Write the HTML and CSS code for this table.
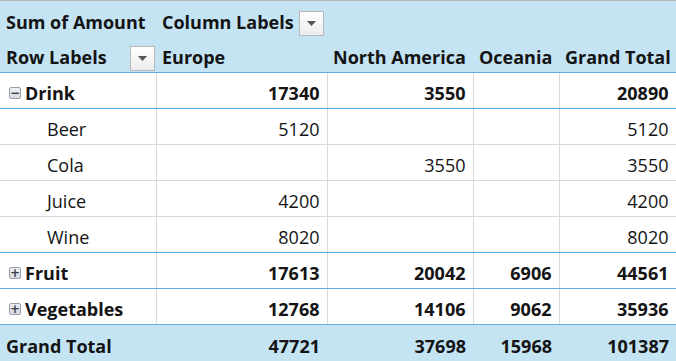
FILE: index.html
```html
<!DOCTYPE html>
<html lang="en">
<head>
    <meta charset="UTF-8">
    <title>Pivot Table</title>
    <link rel="stylesheet" href="styles.css">
</head>
<body>
    <table class="pivot">
        <colgroup>
            <col class="c-label">
            <col class="c-europe">
            <col class="c-na">
            <col class="c-oce">
            <col class="c-total">
        </colgroup>
        <thead>
            <tr class="head-top">
                <th>Sum of Amount</th>
                <th colspan="4" class="split">
                    <div class="field">
                        <span>Column Labels</span>
                        <span class="drop"><svg width="9" height="5" viewBox="0 0 9 5"><path d="M0 0h9L4.5 5z" fill="#555"/></svg></span>
                    </div>
                </th>
            </tr>
            <tr class="head-cols">
                <th>
                    <div class="field">
                        <span>Row Labels</span>
                        <span class="drop"><svg width="9" height="5" viewBox="0 0 9 5"><path d="M0 0h9L4.5 5z" fill="#555"/></svg></span>
                    </div>
                </th>
                <th>Europe</th>
                <th>North America</th>
                <th>Oceania</th>
                <th>Grand Total</th>
            </tr>
        </thead>
        <tbody>
            <tr class="group">
                <td><span class="toggle">&minus;</span>Drink</td>
                <td class="num">17340</td>
                <td class="num">3550</td>
                <td class="num"></td>
                <td class="num">20890</td>
            </tr>
            <tr class="item">
                <td class="indent">Beer</td>
                <td class="num">5120</td>
                <td class="num"></td>
                <td class="num"></td>
                <td class="num">5120</td>
            </tr>
            <tr class="item">
                <td class="indent">Cola</td>
                <td class="num"></td>
                <td class="num">3550</td>
                <td class="num"></td>
                <td class="num">3550</td>
            </tr>
            <tr class="item">
                <td class="indent">Juice</td>
                <td class="num">4200</td>
                <td class="num"></td>
                <td class="num"></td>
                <td class="num">4200</td>
            </tr>
            <tr class="item last">
                <td class="indent">Wine</td>
                <td class="num">8020</td>
                <td class="num"></td>
                <td class="num"></td>
                <td class="num">8020</td>
            </tr>
            <tr class="group">
                <td><span class="toggle">+</span>Fruit</td>
                <td class="num">17613</td>
                <td class="num">20042</td>
                <td class="num">6906</td>
                <td class="num">44561</td>
            </tr>
            <tr class="group">
                <td><span class="toggle">+</span>Vegetables</td>
                <td class="num">12768</td>
                <td class="num">14106</td>
                <td class="num">9062</td>
                <td class="num">35936</td>
            </tr>
        </tbody>
        <tfoot>
            <tr class="grand">
                <td>Grand Total</td>
                <td class="num">47721</td>
                <td class="num">37698</td>
                <td class="num">15968</td>
                <td class="num">101387</td>
            </tr>
        </tfoot>
    </table>
</body>
</html>
```

FILE: styles.css
```css
* {
    margin: 0;
    padding: 0;
    box-sizing: border-box;
}

body {
    background: #ffffff;
    font-family: 'Open Sans', 'Lato', sans-serif;
    color: #141414;
}

.pivot {
    width: 676px;
    table-layout: fixed;
    border-collapse: collapse;
    font-size: 18px;
}

.c-label { width: 156px; }
.c-europe { width: 171px; }
.c-na { width: 146px; }
.c-oce { width: 86px; }
.c-total { width: 117px; }

.pivot tr {
    height: 36px;
}

.pivot th,
.pivot td {
    padding: 0 7px 3px 6px;
    vertical-align: bottom;
    white-space: nowrap;
    line-height: 24px;
}

thead th {
    background: #c4e4f4;
    font-weight: 700;
    text-align: left;
}

.head-top th {
    border-top: 1px solid #b4b4b4;
}

.head-cols th {
    border-bottom: 1px solid #5cb2e4;
}

.head-cols th:last-child {
    border-right: 1px solid #d0d0d0;
}

.pivot th.split {
    padding-right: 0;
}

.pivot .head-cols th:first-child {
    padding-right: 1px;
}

.field {
    display: flex;
    align-items: flex-end;
    justify-content: space-between;
    gap: 5px;
}

.split .field {
    justify-content: flex-start;
}

.drop {
    width: 25px;
    height: 25px;
    margin-bottom: -2px;
    border: 1px solid #b9b9b9;
    background: linear-gradient(#ffffff, #ececec);
    display: flex;
    align-items: center;
    justify-content: center;
}

tbody td {
    border-left: 1px solid #d9d9d9;
    border-right: 1px solid #d9d9d9;
}

tbody tr.item td {
    border-bottom: 1px solid #d9d9d9;
}

tbody tr.group td,
tbody tr.item.last td {
    border-bottom: 1px solid #5cb2e4;
}

tbody tr.group td {
    font-weight: 700;
}

tbody td:first-child {
    border-left: none;
}

.num {
    text-align: right;
}

.pivot td.indent {
    padding-left: 47px;
}

.pivot tr.group td:first-child {
    padding-left: 9px;
}

.toggle {
    display: inline-flex;
    align-items: center;
    justify-content: center;
    width: 12px;
    height: 12px;
    margin-right: 4px;
    margin-bottom: 4px;
    vertical-align: middle;
    border: 1px solid #9aa0a8;
    border-radius: 2px;
    background: linear-gradient(#eef0f4, #d6dae2);
    font-size: 12px;
    line-height: 10px;
    font-weight: 700;
    color: #3a3f4a;
    font-family: 'DejaVu Sans', sans-serif;
}

tfoot td {
    background: #c4e4f4;
    font-weight: 700;
}
```
